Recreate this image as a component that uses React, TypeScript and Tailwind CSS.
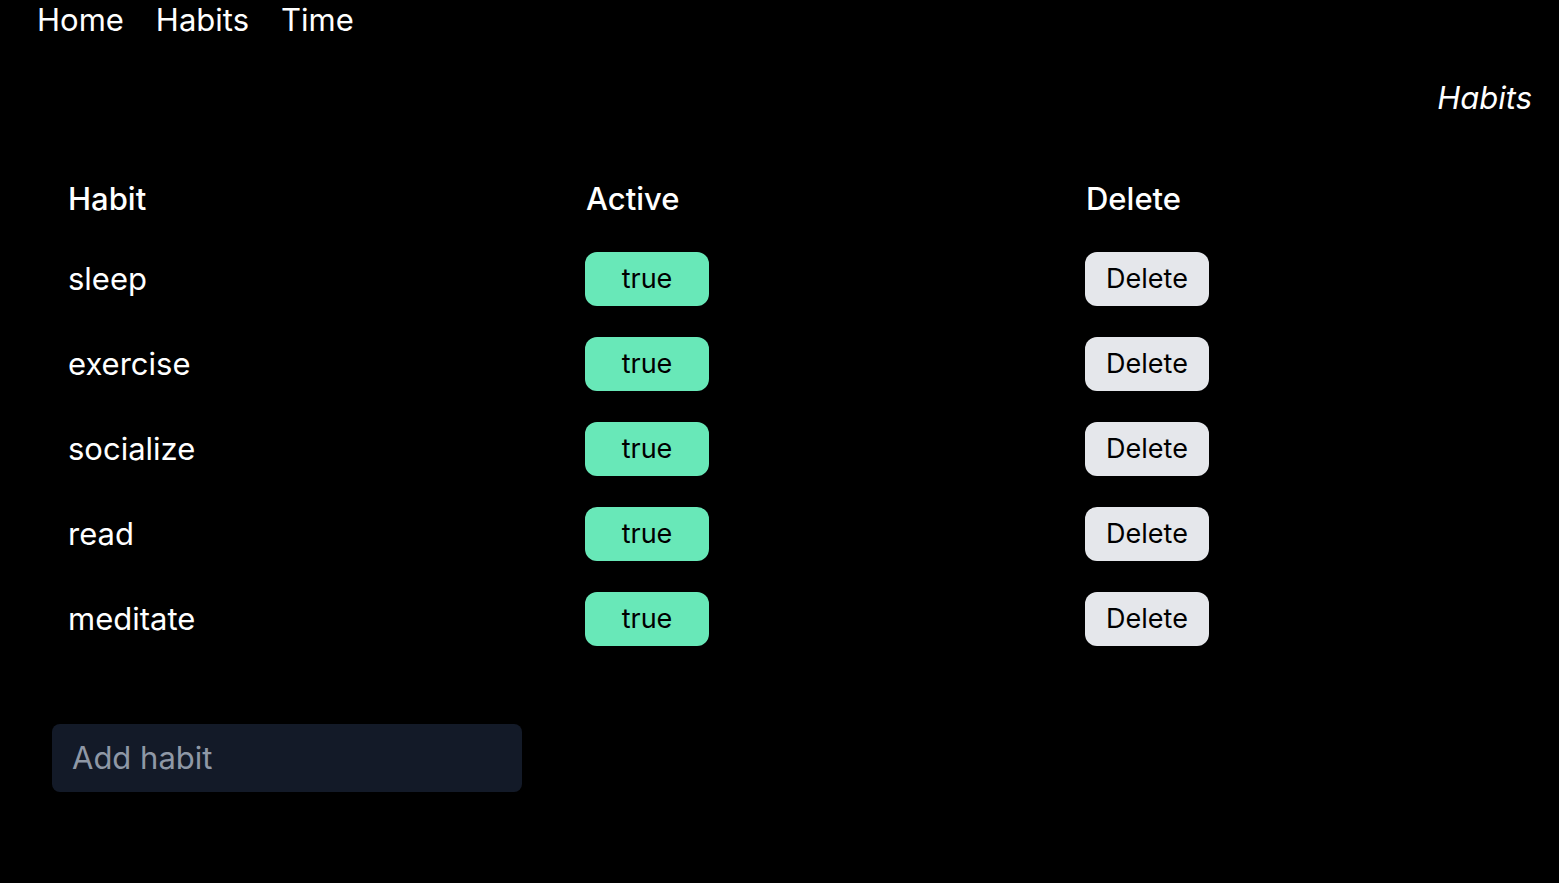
import React, { useState } from 'react';

type Habit = { name: string; active: boolean };

const initialHabits: Habit[] = [
  { name: 'sleep', active: true },
  { name: 'exercise', active: true },
  { name: 'socialize', active: true },
  { name: 'read', active: true },
  { name: 'meditate', active: true },
];

function Nav() {
  return (
    <nav className="flex gap-8 pl-[37px] h-[41px] items-center text-[31px] text-white">
      <a href="#">Home</a>
      <a href="#">Habits</a>
      <a href="#">Time</a>
    </nav>
  );
}

export default function App() {
  const [habits, setHabits] = useState<Habit[]>(initialHabits);
  const [draft, setDraft] = useState('');

  return (
    <div className="min-h-screen bg-black text-white font-['Inter',sans-serif]">
      <Nav />
      <div className="flex justify-end pr-[27px] pt-[34px]">
        <h2 className="text-[31px] italic">Habits</h2>
      </div>

      {/* Habits table */}
      <div className="mx-[52px] mt-[40px] grid grid-cols-[518px_500px_1fr] text-[31px]">
        <div className="px-4 h-[75px] flex items-center font-medium">Habit</div>
        <div className="px-4 h-[75px] flex items-center font-medium">Active</div>
        <div className="px-4 h-[75px] flex items-center font-medium">Delete</div>
        {habits.map((h, i) => (
          <React.Fragment key={h.name}>
            <div className="px-4 h-[85px] flex items-center">{h.name}</div>
            <div className="px-[15px] h-[85px] flex items-center">
              <button
                onClick={() =>
                  setHabits(habits.map((x, j) => (j === i ? { ...x, active: !x.active } : x)))
                }
                className="w-[124px] h-[54px] rounded-xl bg-[#68e8b8] text-black text-[27px]"
              >
                {String(h.active)}
              </button>
            </div>
            <div className="px-[15px] h-[85px] flex items-center">
              <button
                onClick={() => setHabits(habits.filter((_, j) => j !== i))}
                className="w-[124px] h-[54px] rounded-xl bg-[#e5e7eb] text-black text-[27px]"
              >
                Delete
              </button>
            </div>
          </React.Fragment>
        ))}
      </div>

      <div className="px-[52px] mt-[62px]">
        <input
          value={draft}
          onChange={(e) => setDraft(e.target.value)}
          onKeyDown={(e) => {
            if (e.key === 'Enter' && draft.trim()) {
              setHabits([...habits, { name: draft.trim(), active: true }]);
              setDraft('');
            }
          }}
          placeholder="Add habit"
          className="w-[470px] h-[68px] rounded-lg bg-[#131a28] px-5 text-[31px] text-white placeholder:text-[#8f98a6] outline-none"
        />
      </div>
    </div>
  );
}
